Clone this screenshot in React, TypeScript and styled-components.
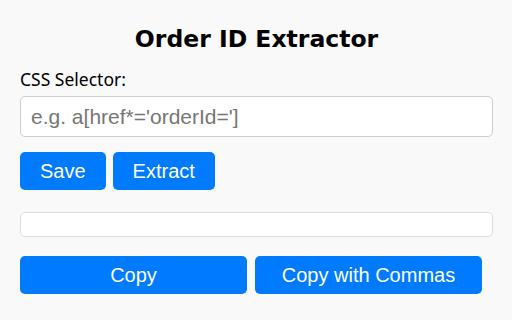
import styled, { createGlobalStyle } from "styled-components";

const GlobalStyle = createGlobalStyle`
  html, body {
    margin: 0;
    padding: 0;
    background: #f9f9f9;
  }
  body {
    font-family: "Noto Sans", "Open Sans", sans-serif;
    color: #000;
  }
`;

export default function App() {
  return (
    <>
      <GlobalStyle />
      <Popup>
        <Title>Order ID Extractor</Title>
        <Label htmlFor="selector">CSS Selector:</Label>
        <SelectorInput id="selector" placeholder="e.g. a[href*='orderId=']" />
        <ButtonRow>
          <ActionButton>Save</ActionButton>
          <ActionButton>Extract</ActionButton>
        </ButtonRow>
        <Output />
        <CopyRow>
          <ActionButton $wide>Copy</ActionButton>
          <ActionButton $wide>Copy with Commas</ActionButton>
        </CopyRow>
      </Popup>
    </>
  );
}

const Popup = styled.div`
  display: flex;
  flex-direction: column;
  padding: 0 19px 20px 20px;
`;

const Title = styled.h2`
  margin: 23px 0 0;
  font-family: "DejaVu Sans", "Noto Sans", sans-serif;
  font-size: 23.5px;
  line-height: 32px;
  font-weight: 700;
  text-align: center;
`;

const Label = styled.label`
  margin-top: 13px;
  font-size: 17.5px;
  line-height: 22px;
`;

const SelectorInput = styled.input`
  margin-top: 6px;
  box-sizing: border-box;
  width: 100%;
  height: 41px;
  padding: 0 10px;
  border: 1px solid #cfcfcf;
  border-radius: 5px;
  background: #fff;
  font-family: "Liberation Sans", Arial, sans-serif;
  font-size: 21px;
  outline: none;
  &::placeholder {
    color: #777;
  }
`;

const ButtonRow = styled.div`
  display: flex;
  gap: 7px;
  margin-top: 15px;
`;

const CopyRow = styled.div`
  display: flex;
  gap: 8px;
  margin-top: 19px;
`;

const ActionButton = styled.button<{ $wide?: boolean }>`
  box-sizing: border-box;
  height: 38px;
  width: ${(p) => (p.$wide ? "227px" : "auto")};
  padding: 0 20px;
  border: none;
  border-radius: 5px;
  background: #007bff;
  color: #fff;
  font-family: "Liberation Sans", Arial, sans-serif;
  font-size: 20px;
  cursor: pointer;
`;

const Output = styled.div`
  margin-top: 22px;
  box-sizing: border-box;
  height: 25px;
  border: 1px solid #dcdcdc;
  border-radius: 5px;
  background: #fff;
`;
